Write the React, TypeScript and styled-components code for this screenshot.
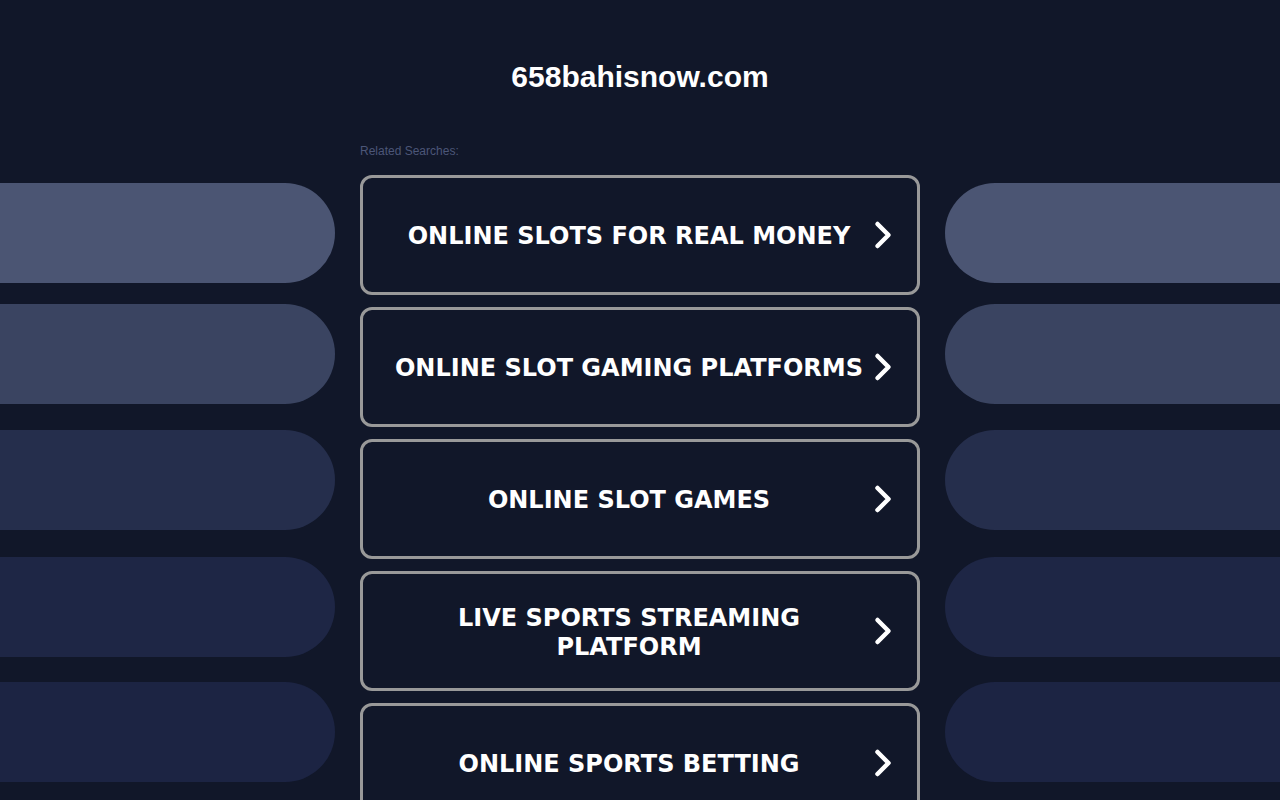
import React from 'react';
import styled, { createGlobalStyle } from 'styled-components';

const GlobalStyle = createGlobalStyle`
	html, body {
		margin: 0;
		padding: 0;
		background-color: #111729;
	}
	* {
		box-sizing: border-box;
	}
`;

const pills = [
	{ color: '#4b5573', gap: 183 },
	{ color: '#3a4461', gap: 21 },
	{ color: '#252e4c', gap: 26 },
	{ color: '#1e2645', gap: 27 },
	{ color: '#1c2443', gap: 25 },
];

const links = [
	'ONLINE SLOTS FOR REAL MONEY',
	'ONLINE SLOT GAMING PLATFORMS',
	'ONLINE SLOT GAMES',
	'LIVE SPORTS STREAMING PLATFORM',
	'ONLINE SPORTS BETTING',
];

const Chevron = () => (
	<svg width="22" height="30" viewBox="0 0 22 30">
		<polyline
			points="7.5,4 18.5,15 7.5,26"
			fill="none"
			stroke="#fff"
			strokeWidth="4.5"
			strokeLinecap="round"
			strokeLinejoin="round"
		/>
	</svg>
);

export default function App() {
	return (
		<>
			<GlobalStyle />
			<Page>
				<Side>
					{pills.map((p, i) => (
						<Pill key={i} $color={p.color} $gap={p.gap} $side="left" />
					))}
				</Side>
				<Main>
					<Title>658bahisnow.com</Title>
					<Related>Related Searches:</Related>
					<List>
						{links.map(text => (
							<LinkButton key={text} href="#">
								<Label>{text}</Label>
								<Arrow>
									<Chevron />
								</Arrow>
							</LinkButton>
						))}
					</List>
				</Main>
				<Side>
					{pills.map((p, i) => (
						<Pill key={i} $color={p.color} $gap={p.gap} $side="right" />
					))}
				</Side>
			</Page>
		</>
	);
}

const Page = styled.div`
	display: grid;
	grid-template-columns: 1fr 560px 1fr;
	column-gap: 25px;
	min-height: 800px;
	background-color: #111729;
`;

const Side = styled.div`
	display: flex;
	flex-direction: column;
`;

const Pill = styled.div<{ $color: string; $gap: number; $side: 'left' | 'right' }>`
	height: 100px;
	margin-top: ${p => p.$gap}px;
	background-color: ${p => p.$color};
	border-radius: ${p => (p.$side === 'left' ? '0 50px 50px 0' : '50px 0 0 50px')};
`;

const Main = styled.div`
	display: flex;
	flex-direction: column;
	padding-top: 60px;
`;

const Title = styled.h1`
	margin: 0;
	font-family: 'Liberation Sans', Arial, sans-serif;
	font-size: 30px;
	line-height: 34px;
	font-weight: 700;
	color: #ffffff;
	text-align: center;
`;

const Related = styled.div`
	margin-top: 50px;
	font-family: 'Liberation Sans', Arial, sans-serif;
	font-size: 12px;
	line-height: 14px;
	color: #4c5678;
`;

const List = styled.div`
	display: flex;
	flex-direction: column;
	gap: 12px;
	margin-top: 17px;
`;

const LinkButton = styled.a`
	display: flex;
	align-items: center;
	height: 120px;
	padding: 0 25px;
	border: 3px solid #999999;
	border-radius: 12px;
	text-decoration: none;
	color: #ffffff;
`;

const Label = styled.span`
	flex: 1;
	padding-top: 3px;
	text-align: center;
	font-family: 'DejaVu Sans', Verdana, sans-serif;
	font-size: 24px;
	line-height: 29px;
	font-weight: 700;
`;

const Arrow = styled.span`
	display: flex;
	width: 22px;
	justify-content: center;
`;
